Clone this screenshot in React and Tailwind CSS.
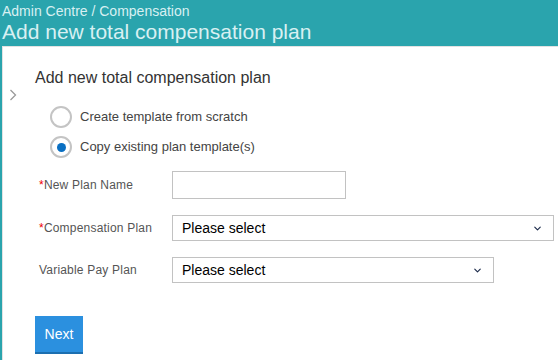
import { ChevronDown } from 'lucide-react';

const font = { fontFamily: '"Liberation Sans", Arial, sans-serif' };

const Radio = ({ checked, label }) => (
  <label className="flex items-center gap-[8px] h-[22px]">
    <span className="flex items-center justify-center w-[22px] h-[22px] rounded-full border-2 border-[#c4c4c4] bg-white">
      {checked && <span className="w-[9px] h-[9px] rounded-full bg-[#0a6fc2]" />}
    </span>
    <span className="text-[13px] text-[#444]">{label}</span>
  </label>
);

const Row = ({ label, required, children }) => (
  <div className="flex items-center">
    <div className="w-[133px] text-[12px] text-[#555] tracking-[0.2px]">
      {required && <span className="text-[#e00]">*</span>}
      {label}
    </div>
    {children}
  </div>
);

const Select = ({ width }) => (
  <div className={`flex items-center justify-between h-[26px] border border-[#c2c2c2] bg-white pl-[9px] pr-[10px] ${width}`}>
    <span className="text-[14px] text-black">Please select</span>
    <ChevronDown size={11} strokeWidth={2.5} className="text-[#1b2a4a]" />
  </div>
);

export default function App() {
  return (
    <div style={font} className="w-[558px] h-[360px] overflow-hidden bg-[#2aa4ad]">
      <div className="h-[46px] pl-[2px] pt-[3px]">
        <div className="text-[14px] leading-[16px] text-[#d8f0f2]">Admin Centre / Compensation</div>
        <div className="text-[21px] leading-[26px] text-[#d8f0f2]">Add new total compensation plan</div>
      </div>
      <div className="ml-[2px] h-[314px] bg-white border-t border-l border-[#e2e2e2] flex">
        <div className="w-[32px] pt-[42px] pl-[6px]">
          <svg width="8" height="12" viewBox="0 0 8 12" fill="none">
            <path d="M1.5 1 L6.5 6 L1.5 11" stroke="#9a9a9a" strokeWidth="1.3" />
          </svg>
        </div>
        <div className="pt-[22px]">
          <h1 className="text-[16px] leading-[18px] text-[#333]">Add new total compensation plan</h1>
          <div className="mt-[19px] ml-[15px] flex flex-col gap-[8px]">
            <Radio label="Create template from scratch" />
            <Radio checked label="Copy existing plan template(s)" />
          </div>
          <div className="mt-[13px] flex flex-col gap-[16px] ml-[4px]">
            <Row label="New Plan Name" required>
              <div className="w-[174px] h-[28px] border border-[#c2c2c2] bg-white" />
            </Row>
            <Row label="Compensation Plan" required>
              <Select width="w-[382px]" />
            </Row>
            <Row label="Variable Pay Plan">
              <Select width="w-[322px]" />
            </Row>
          </div>
          <button className="mt-[33px] w-[48px] h-[38px] bg-[#2b90df] border-b-2 border-[#1c6fb0] text-white text-[14px]">
            Next
          </button>
        </div>
      </div>
    </div>
  );
}
